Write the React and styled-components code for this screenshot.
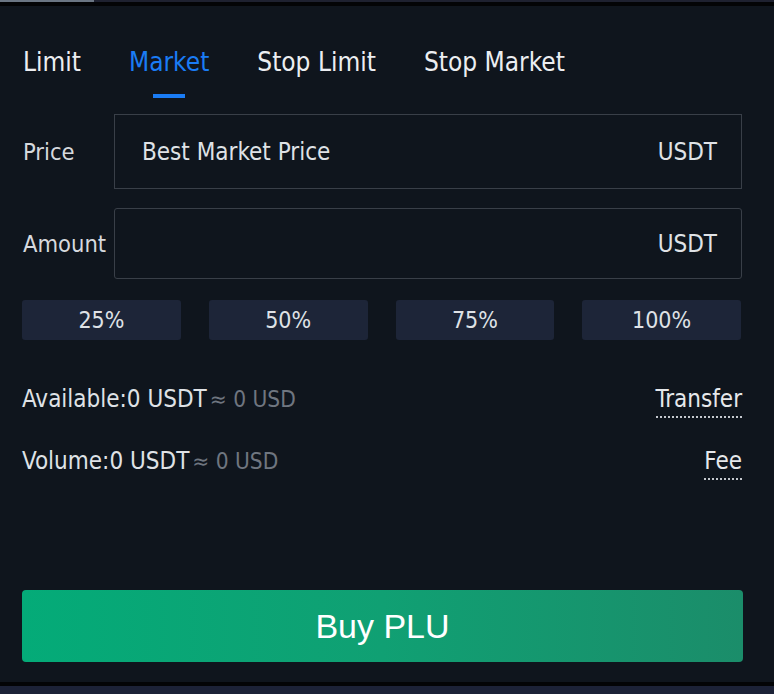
import React, { useState } from "react";
import styled, { createGlobalStyle } from "styled-components";

const GlobalStyle = createGlobalStyle`
  html, body {
    margin: 0;
    padding: 0;
    background: #000;
  }
  * {
    box-sizing: border-box;
  }
`;

const Page = styled.div`
  width: 774px;
  height: 694px;
  display: flex;
  flex-direction: column;
  font-family: "DejaVu Sans Condensed", "DejaVu Sans", sans-serif;
  font-stretch: condensed;
`;

const TopStrip = styled.div`
  height: 2px;
  background: #1e2130;
  display: flex;
`;

const TopStripActive = styled.div`
  width: 94px;
  background: #6b7684;
`;

const Divider = styled.div`
  height: 4px;
  background: #030406;
`;

const BottomBar = styled.div`
  height: 8px;
  background: #1c2237;
`;

const Panel = styled.div`
  flex: 1;
  background: #0f151d;
  display: flex;
  flex-direction: column;
  padding: 42px 32px 20px 22px;
`;

const Tabs = styled.div`
  display: flex;
  gap: 48px;
  padding-left: 1px;
`;

const Tab = styled.div`
  display: flex;
  flex-direction: column;
  align-items: center;
  cursor: pointer;
  font-size: 26px;
  line-height: 28px;
  color: ${(p) => (p.$active ? "#1a7cf5" : "#eceef1")};

  &::after {
    content: "";
    margin-top: 18px;
    width: 32px;
    height: 4px;
    background: ${(p) => (p.$active ? "#1a7cf5" : "transparent")};
  }
`;

const FieldRow = styled.div`
  display: flex;
  align-items: center;
  margin-top: ${(p) => p.$top}px;
`;

const Label = styled.div`
  width: 92px;
  padding-left: 1px;
  font-size: 23.5px;
  color: #d6d9de;
`;

const Field = styled.div`
  flex: 1;
  height: ${(p) => p.$height}px;
  border: 1px solid #393f48;
  border-radius: ${(p) => p.$radius}px;
  display: flex;
  align-items: center;
  justify-content: space-between;
  padding: 0 24px 0 27px;
  font-size: 24px;
  color: #dfe2e6;
`;

const Unit = styled.span`
  margin-left: auto;
  color: #dfe2e6;
`;

const Percents = styled.div`
  display: grid;
  grid-template-columns: repeat(4, 1fr);
  gap: 28px;
  margin-top: 21px;
  margin-right: 1px;
`;

const PercentButton = styled.button`
  height: 40px;
  border: none;
  border-radius: 3px;
  background: #1d2538;
  color: #dfe2e6;
  font-family: inherit;
  font-stretch: condensed;
  font-size: 23px;
  cursor: pointer;
  padding: 0;
`;

const InfoRow = styled.div`
  display: flex;
  justify-content: space-between;
  align-items: flex-start;
  height: 32px;
  margin-top: ${(p) => p.$top}px;
  font-size: 24px;
  line-height: 28px;
`;

const InfoText = styled.div`
  color: #dfe2e6;
`;

const Approx = styled.span`
  color: #6f7680;
  margin-left: 3px;
  font-size: 22.5px;
`;

const DottedLink = styled.span`
  color: #e6e8eb;
  padding-bottom: 3px;
  border-bottom: 2px dotted #c4c8ce;
  cursor: pointer;
`;

const BuyButton = styled.button`
  margin-top: auto;
  margin-right: -1px;
  height: 72px;
  border: none;
  border-radius: 4px;
  background: linear-gradient(90deg, #04ab78 0%, #10a073 50%, #1b8d6a 100%);
  color: #fff;
  font-family: "Liberation Sans", Arial, sans-serif;
  font-size: 34px;
  cursor: pointer;
`;

const tabs = ["Limit", "Market", "Stop Limit", "Stop Market"];
const percents = ["25%", "50%", "75%", "100%"];

const App = () => {
  const [active, setActive] = useState("Market");

  return (
    <Page>
      <GlobalStyle />
      <TopStrip>
        <TopStripActive />
      </TopStrip>
      <Divider />
      <Panel>
        <Tabs>
          {tabs.map((t) => (
            <Tab key={t} $active={t === active} onClick={() => setActive(t)}>
              {t}
            </Tab>
          ))}
        </Tabs>

        <FieldRow $top={16}>
          <Label>Price</Label>
          <Field $height={75} $radius={0}>
            <span>Best Market Price</span>
            <Unit>USDT</Unit>
          </Field>
        </FieldRow>

        <FieldRow $top={19}>
          <Label>Amount</Label>
          <Field $height={71} $radius={3}>
            <Unit>USDT</Unit>
          </Field>
        </FieldRow>

        <Percents>
          {percents.map((p) => (
            <PercentButton key={p}>{p}</PercentButton>
          ))}
        </Percents>

        <InfoRow $top={45}>
          <InfoText>
            Available:0 USDT<Approx>≈ 0 USD</Approx>
          </InfoText>
          <DottedLink>Transfer</DottedLink>
        </InfoRow>

        <InfoRow $top={30}>
          <InfoText>
            Volume:0 USDT<Approx>≈ 0 USD</Approx>
          </InfoText>
          <DottedLink>Fee</DottedLink>
        </InfoRow>

        <BuyButton>Buy PLU</BuyButton>
      </Panel>
      <Divider />
      <BottomBar />
    </Page>
  );
};

export default App;
